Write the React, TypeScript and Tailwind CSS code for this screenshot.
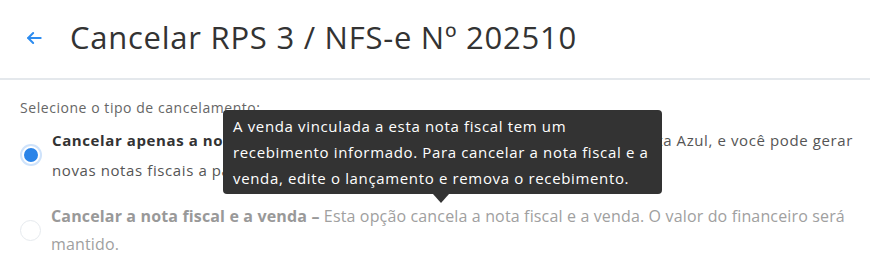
import React from 'react';

const body = { fontFamily: '"Open Sans", "Liberation Sans", sans-serif' };

function Radio({ checked }: { checked: boolean }) {
  if (checked) {
    return (
      <span className="flex h-[22px] w-[22px] shrink-0 items-center justify-center rounded-full bg-[#cfe3fb]">
        <span className="h-[18px] w-[18px] rounded-full border-2 border-white bg-[#2b84e8]" />
      </span>
    );
  }
  return <span className="h-[21px] w-[21px] shrink-0 rounded-full border border-[#e6eaee] bg-white" />;
}

export default function App() {
  return (
    <div className="relative h-[277px] w-[872px] overflow-hidden bg-white">
      <div className="mr-[2px] flex h-[80px] items-center border-b-2 border-[#e4e8ec] pl-[24px]">
        <svg width="20" height="20" viewBox="0 0 24 24" fill="none" stroke="#2d8cf0" strokeWidth="2.4" strokeLinecap="round" strokeLinejoin="round" className="mt-[-2px]">
          <path d="M20 12H5" />
          <path d="M11 6l-6 6 6 6" />
        </svg>
        <h1 className="ml-[26px] mt-[-4px] text-[31px] font-medium leading-none tracking-[0.75px] text-[#333]" style={body}>
          Cancelar RPS 3 / NFS-e Nº 202510
        </h1>
      </div>

      <div className="px-[20px] pt-[18px]" style={body}>
        <p className="text-[14px] leading-[20px] tracking-[0.55px] text-[#666]">Selecione o tipo de cancelamento:</p>

        <label className="mt-[7px] flex items-center gap-[10px]">
          <Radio checked />
          <span className="text-[15px] leading-[30px] tracking-[0.6px] text-[#555]">
            <span className="block whitespace-nowrap">
              <b className="font-bold text-[#333]">Cancelar apenas a nota fiscal – </b>
              Esta opção cancela a nota. A venda fica na Conta Azul, e você pode gerar
            </span>
            <span className="block whitespace-nowrap">novas notas fiscais a partir dela.</span>
          </span>
        </label>

        <label className="mt-[17px] flex items-center gap-[10px]">
          <Radio checked={false} />
          <span className="text-[16px] leading-[28px] tracking-[0.15px] text-[#a0a0a0]">
            <span className="block whitespace-nowrap">
              <b className="font-bold text-[#999]">Cancelar a nota fiscal e a venda – </b>
              Esta opção cancela a nota fiscal e a venda. O valor do financeiro será
            </span>
            <span className="block">mantido.</span>
          </span>
        </label>
      </div>

      <div className="absolute left-[223px] top-[110px] w-[439px] rounded-[4px] bg-[#333] px-[10px] py-[3px] text-[15px] leading-[26px] tracking-[0.65px] text-white" style={body}>
        A venda vinculada a esta nota fiscal tem um
        <br />
        recebimento informado. Para cancelar a nota fiscal e a
        <br />
        venda, edite o lançamento e remova o recebimento.
        <span className="absolute left-[210px] top-full h-0 w-0 border-x-[8px] border-t-[9px] border-x-transparent border-t-[#333]" />
      </div>
    </div>
  );
}
